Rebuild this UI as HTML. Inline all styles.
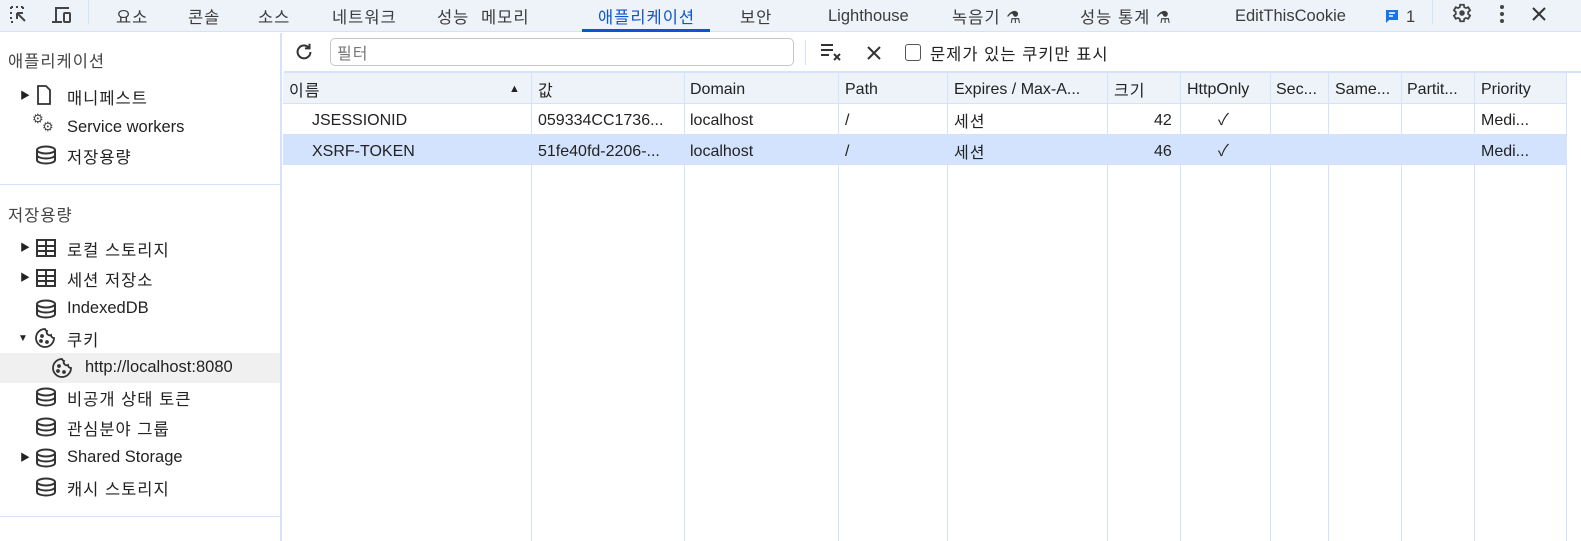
<!DOCTYPE html>
<html><head><meta charset="utf-8"><style>
*{margin:0;padding:0;box-sizing:border-box}
body{width:1581px;height:541px;overflow:hidden;background:#fff;font-family:"Liberation Sans","Noto Sans CJK KR",sans-serif;font-size:15px;color:#1f1f1f;position:relative}
.a{position:absolute;white-space:nowrap;line-height:20px}
#top{position:absolute;left:0;top:0;width:1581px;height:32px;background:#eef2f9;border-bottom:1px solid #d3e3fd}
.tab{position:absolute;top:5px;font-size:16.5px;color:#3c3c3c;line-height:20px;white-space:nowrap}
.k{letter-spacing:1px;transform:translateY(3px)}
.sb{position:absolute;left:0;top:33px;width:282px;height:508px;border-right:2px solid #d3e3fd}
.it{position:absolute;font-size:16.5px;color:#222;line-height:20px;white-space:nowrap}
.hr{position:absolute;left:0;width:280px;height:1px;background:#d3e3fd}
.vl{position:absolute;top:73px;width:1px;height:468px;background:#d3e3fd}
.c{position:absolute;font-size:16px;color:#222;line-height:20px;white-space:nowrap}
</style></head><body>
<div id="top">
<svg class="a" style="left:8px;top:4px" width="22" height="22" viewBox="0 0 22 22" fill="none" stroke="#444" stroke-width="2"><path d="M3 3h2M8 3h2M13 3h2M3 3v2M3 8v2M3 13v2M3 18h2M15 3v2" stroke-dasharray="2 2"/><path d="M9 9l8 8M9 9h6M9 9v6"/></svg>
<svg class="a" style="left:50px;top:4px" width="24" height="22" viewBox="0 0 24 22" fill="none" stroke="#444" stroke-width="2"><path d="M5 4h14M6 4v14M2 18h10"/><rect x="14" y="9" width="6" height="9" rx="1"/></svg>
<div class="a" style="left:88px;top:0;width:1px;height:24px;background:#d3e3fd"></div>
<span class="tab k" style="left:116px">요소</span>
<span class="tab k" style="left:188px">콘솔</span>
<span class="tab k" style="left:258px">소스</span>
<span class="tab k" style="left:332px">네트워크</span>
<span class="tab k" style="left:437px">성능</span>
<span class="tab k" style="left:481px">메모리</span>
<span class="tab k" style="left:598px;color:#0b57d0">애플리케이션</span>
<div class="a" style="left:582px;top:29px;width:128px;height:3px;background:#0b57d0"></div>
<span class="tab k" style="left:740px">보안</span>
<span class="tab" style="left:828px;top:6px">Lighthouse</span>
<span class="tab k" style="left:952px">녹음기 ⚗</span>
<span class="tab k" style="left:1080px">성능 통계 ⚗</span>
<span class="tab" style="left:1235px;top:6px">EditThisCookie</span>
<svg class="a" style="left:1384px;top:8px" width="16" height="16" viewBox="0 0 16 16"><path d="M2 2h12v10H5l-3 3z" fill="#1a73e8"/><path d="M5 5h6M5 8h4" stroke="#fff" stroke-width="1.4"/></svg>
<span class="tab" style="left:1406px;top:7px">1</span>
<div class="a" style="left:1432px;top:0;width:1px;height:24px;background:#d3e3fd"></div>
<svg class="a" style="left:1451px;top:2px" width="22" height="22" viewBox="0 0 24 24"><path fill="none" stroke="#444" stroke-width="2" d="M10 3h4l.5 2.6 1.8 1 2.5-.9 2 3.4-2 1.7v2.4l2 1.7-2 3.4-2.5-.9-1.8 1L14 21h-4l-.5-2.6-1.8-1-2.5.9-2-3.4 2-1.7v-2.4l-2-1.7 2-3.4 2.5.9 1.8-1z"/><circle cx="12" cy="12" r="3" fill="#444"/></svg>
<svg class="a" style="left:1496px;top:4px" width="12" height="20"><circle cx="6" cy="3" r="2" fill="#444"/><circle cx="6" cy="10" r="2" fill="#444"/><circle cx="6" cy="17" r="2" fill="#444"/></svg>
<svg class="a" style="left:1531px;top:6px" width="16" height="16" stroke="#333" stroke-width="2"><path d="M2 2l12 12M14 2L2 14"/></svg>
</div>

<div class="sb">
<span class="it k" style="left:8px;top:16px;color:#444">애플리케이션</span>
<span class="it" style="left:20px;top:54px;font-size:10px">▶</span>
<svg class="a" style="left:36px;top:51px" width="16" height="22" fill="none" stroke="#333" stroke-width="1.8"><path d="M2 2h8l4 4v14H2z"/></svg>
<span class="it k" style="left:67px;top:53px">매니페스트</span>
<span class="it" style="left:32px;top:76px;font-size:13px;color:#444">⚙</span><span class="it" style="left:42px;top:84px;font-size:13px;color:#444">⚙</span>
<span class="it" style="left:67px;top:84px">Service workers</span>
<svg class="a" style="left:35px;top:112px" width="22" height="20" fill="none" stroke="#333" stroke-width="2"><ellipse cx="11" cy="5" rx="9" ry="3.5"/><path d="M2 5v10c0 2 4 3.5 9 3.5s9-1.5 9-3.5V5M2 10c0 2 4 3.5 9 3.5s9-1.5 9-3.5"/></svg>
<span class="it k" style="left:67px;top:112px">저장용량</span>
<div class="hr" style="top:151px"></div>
<span class="it k" style="left:8px;top:170px;color:#444">저장용량</span>
<span class="it" style="left:20px;top:206px;font-size:10px">▶</span>
<svg class="a" style="left:35px;top:205px" width="22" height="20" fill="none" stroke="#333" stroke-width="2"><rect x="2" y="2" width="18" height="16"/><path d="M2 8h18M2 13h18M11 2v16"/></svg>
<span class="it k" style="left:67px;top:205px">로컬 스토리지</span>
<span class="it" style="left:20px;top:236px;font-size:10px">▶</span>
<svg class="a" style="left:35px;top:235px" width="22" height="20" fill="none" stroke="#333" stroke-width="2"><rect x="2" y="2" width="18" height="16"/><path d="M2 8h18M2 13h18M11 2v16"/></svg>
<span class="it k" style="left:67px;top:235px">세션 저장소</span>
<svg class="a" style="left:35px;top:266px" width="22" height="20" fill="none" stroke="#333" stroke-width="2"><ellipse cx="11" cy="5" rx="9" ry="3.5"/><path d="M2 5v10c0 2 4 3.5 9 3.5s9-1.5 9-3.5V5M2 10c0 2 4 3.5 9 3.5s9-1.5 9-3.5"/></svg>
<span class="it" style="left:67px;top:265px">IndexedDB</span>
<span class="it" style="left:18px;top:296px;font-size:10px">▼</span>
<svg class="a" style="left:33px;top:293px" width="24" height="24" fill="none" stroke="#333" stroke-width="1.8"><path d="M12 3a9 9 0 109 9 3 3 0 01-3-3 3 3 0 01-4-4 3 3 0 01-2-2z"/><circle cx="9" cy="10" r="1" fill="#333"/><circle cx="8" cy="15" r="1" fill="#333"/><circle cx="14" cy="16" r="1" fill="#333"/></svg>
<span class="it k" style="left:67px;top:295px">쿠키</span>
<div class="a" style="left:0;top:320px;width:280px;height:30px;background:#f0f0f0"></div>
<svg class="a" style="left:50px;top:323px" width="24" height="24" fill="none" stroke="#333" stroke-width="1.8"><path d="M12 3a9 9 0 109 9 3 3 0 01-3-3 3 3 0 01-4-4 3 3 0 01-2-2z"/><circle cx="9" cy="10" r="1" fill="#333"/><circle cx="8" cy="15" r="1" fill="#333"/><circle cx="14" cy="16" r="1" fill="#333"/></svg>
<span class="it" style="left:85px;top:324px">http://localhost:8080</span>
<svg class="a" style="left:35px;top:354px" width="22" height="20" fill="none" stroke="#333" stroke-width="2"><ellipse cx="11" cy="5" rx="9" ry="3.5"/><path d="M2 5v10c0 2 4 3.5 9 3.5s9-1.5 9-3.5V5M2 10c0 2 4 3.5 9 3.5s9-1.5 9-3.5"/></svg>
<span class="it k" style="left:67px;top:354px">비공개 상태 토큰</span>
<svg class="a" style="left:35px;top:384px" width="22" height="20" fill="none" stroke="#333" stroke-width="2"><ellipse cx="11" cy="5" rx="9" ry="3.5"/><path d="M2 5v10c0 2 4 3.5 9 3.5s9-1.5 9-3.5V5M2 10c0 2 4 3.5 9 3.5s9-1.5 9-3.5"/></svg>
<span class="it k" style="left:67px;top:384px">관심분야 그룹</span>
<span class="it" style="left:20px;top:416px;font-size:10px">▶</span>
<svg class="a" style="left:35px;top:415px" width="22" height="20" fill="none" stroke="#333" stroke-width="2"><ellipse cx="11" cy="5" rx="9" ry="3.5"/><path d="M2 5v10c0 2 4 3.5 9 3.5s9-1.5 9-3.5V5M2 10c0 2 4 3.5 9 3.5s9-1.5 9-3.5"/></svg>
<span class="it" style="left:67px;top:414px">Shared Storage</span>
<svg class="a" style="left:35px;top:444px" width="22" height="20" fill="none" stroke="#333" stroke-width="2"><ellipse cx="11" cy="5" rx="9" ry="3.5"/><path d="M2 5v10c0 2 4 3.5 9 3.5s9-1.5 9-3.5V5M2 10c0 2 4 3.5 9 3.5s9-1.5 9-3.5"/></svg>
<span class="it k" style="left:67px;top:444px">캐시 스토리지</span>
<div class="hr" style="top:483px"></div>
</div>

<!-- toolbar -->
<svg class="a" style="left:293px;top:41px" width="22" height="22" viewBox="0 0 24 24" fill="none" stroke="#333" stroke-width="2.2"><path d="M19 12a7 7 0 11-2-5"/><path d="M18 3v5h-5"/></svg>
<div class="a" style="left:330px;top:38px;width:464px;height:28px;border:1px solid #c4c7cc;border-radius:5px"></div>
<span class="a k" style="left:337px;top:42px;font-size:16px;color:#777">필터</span>
<div class="a" style="left:805px;top:40px;width:1px;height:25px;background:#d3e3fd"></div>
<svg class="a" style="left:820px;top:42px" width="24" height="20" stroke="#333" stroke-width="2"><path d="M1 3h12M1 8h12M1 13h8M14 12l6 6M20 12l-6 6"/></svg>
<svg class="a" style="left:866px;top:45px" width="16" height="16" stroke="#333" stroke-width="2"><path d="M2 2l12 12M14 2L2 14"/></svg>
<div class="a" style="left:905px;top:44px;width:16px;height:17px;border:1.5px solid #555;border-radius:3px"></div>
<span class="a k" style="left:930px;top:42px;font-size:16.5px;color:#222">문제가 있는 쿠키만 표시</span>
<div class="a" style="left:284px;top:71px;width:1297px;height:2px;background:#d3e3fd"></div>

<!-- table -->
<div class="a" style="left:283px;top:73px;width:1283px;height:31px;background:#eef2f9;border-bottom:1px solid #d3e3fd"></div>
<div class="a" style="left:283px;top:135px;width:1283px;height:30px;background:#d3e3fd"></div>
<div class="a" style="left:283px;top:134px;width:1283px;height:1px;background:#d3e3fd"></div>
<div class="vl" style="left:531px"></div><div class="vl" style="left:684px"></div><div class="vl" style="left:838px"></div><div class="vl" style="left:947px"></div><div class="vl" style="left:1107px"></div><div class="vl" style="left:1180px"></div><div class="vl" style="left:1270px"></div><div class="vl" style="left:1328px"></div><div class="vl" style="left:1401px"></div><div class="vl" style="left:1474px"></div><div class="vl" style="left:1566px"></div>
<span class="c k" style="left:289px;top:79px">이름</span><span class="c" style="left:509px;top:79px;font-size:11px">▲</span>
<span class="c k" style="left:538px;top:79px">값</span>
<span class="c" style="left:690px;top:80px">Domain</span>
<span class="c" style="left:845px;top:80px">Path</span>
<span class="c" style="left:954px;top:80px">Expires / Max-A...</span>
<span class="c k" style="left:1114px;top:79px">크기</span>
<span class="c" style="left:1187px;top:80px">HttpOnly</span>
<span class="c" style="left:1276px;top:80px">Sec...</span>
<span class="c" style="left:1335px;top:80px">Same...</span>
<span class="c" style="left:1407px;top:80px">Partit...</span>
<span class="c" style="left:1481px;top:80px">Priority</span>

<span class="c" style="left:312px;top:111px">JSESSIONID</span>
<span class="c" style="left:538px;top:111px">059334CC1736...</span>
<span class="c" style="left:690px;top:111px">localhost</span>
<span class="c" style="left:845px;top:111px">/</span>
<span class="c k" style="left:954px;top:110px">세션</span>
<span class="c" style="left:1154px;top:111px">42</span>
<span class="c" style="left:1218px;top:111px">✓</span>
<span class="c" style="left:1481px;top:111px">Medi...</span>

<span class="c" style="left:312px;top:142px">XSRF-TOKEN</span>
<span class="c" style="left:538px;top:142px">51fe40fd-2206-...</span>
<span class="c" style="left:690px;top:142px">localhost</span>
<span class="c" style="left:845px;top:142px">/</span>
<span class="c k" style="left:954px;top:141px">세션</span>
<span class="c" style="left:1154px;top:142px">46</span>
<span class="c" style="left:1218px;top:142px">✓</span>
<span class="c" style="left:1481px;top:142px">Medi...</span>
</body></html>
